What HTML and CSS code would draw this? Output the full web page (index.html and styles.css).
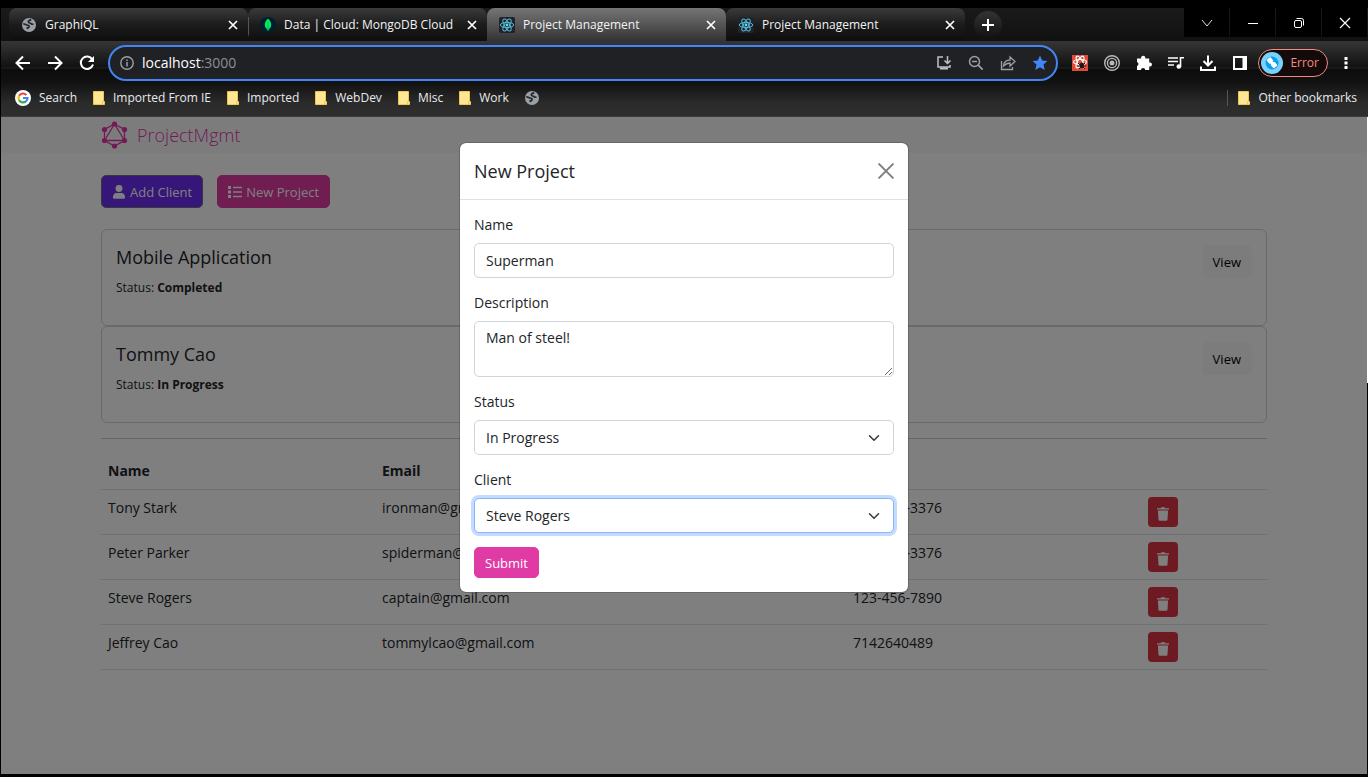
FILE: index.html
```html
<!DOCTYPE html>
<html lang="en">
<head>
<meta charset="utf-8">
<title>Project Management</title>
<link rel="stylesheet" href="styles.css">
</head>
<body>
<svg class="defs" aria-hidden="true">
  <symbol id="globe" viewBox="0 0 14 14"><circle cx="7" cy="7" r="7" fill="#9aa0a6"/><path d="M1.300 5.800C3 5.700 3.800 7 5.300 7.200c1.500.1 2.200.8 1.700 1.800-.5.900-1.500 1-2.500 1.600M9.300 1.800C7.500 2 6.300 2.600 6.300 3.800c0 1.300 1.600 1 2.400 1.600.9.700 1.300 1.100 2.800.8" fill="none" stroke="#25282c" stroke-width="1.700"/></symbol>
  <symbol id="close" viewBox="0 0 10 10"><path d="M1 1l8 8M9 1L1 9" fill="none" stroke="currentColor" stroke-width="1.700"/></symbol>
  <symbol id="react" viewBox="0 0 16 16"><rect width="16" height="16" rx="2" fill="#20232a"/><g fill="none" stroke="#53b9d3" stroke-width="1"><ellipse cx="8" cy="8" rx="6.700" ry="2.600"/><ellipse cx="8" cy="8" rx="6.700" ry="2.600" transform="rotate(60 8 8)"/><ellipse cx="8" cy="8" rx="6.700" ry="2.600" transform="rotate(120 8 8)"/></g><circle cx="8" cy="8" r="1.400" fill="#61dafb"/></symbol>
  <symbol id="folder" viewBox="0 0 12 14"><path d="M.5.500h10v10h1v3H.5z" fill="#ffe694" stroke="#eec84c"/><path d="M9.500 10.500v2.500" stroke="#eec84c"/></symbol>
  <symbol id="trash" viewBox="0 0 12 14"><path d="M0 1.200h3.700L4.300.300h3.400l.6.900H12v1.300H0zM.9 3.500h10.200l-.6 9.200q-.1 1.100-1.300 1.100H2.800q-1.200 0-1.300-1.100z" fill="currentColor"/></symbol>
  <symbol id="chevron" viewBox="0 0 16 16"><path d="M2 5l6 6 6-6" fill="none" stroke="#343a40" stroke-width="2" stroke-linecap="round" stroke-linejoin="round"/></symbol>
</svg>

<div class="browser">
  <header class="chrome">
    <div class="tabstrip">
      <div class="tabs">
        <div class="tab"><svg class="favicon favicon-small"><use href="#globe"/></svg><span class="tab-title">GraphiQL</span><button class="tab-close" aria-label="Close tab"><svg><use href="#close"/></svg></button></div>
        <div class="tab tab-divided"><svg class="favicon" viewBox="0 0 16 16"><circle cx="8" cy="8" r="8" fill="#001e2b"/><path d="M8 1.500c2.400 2.300 3.200 4.500 3.200 6.300 0 2-1 3.500-2.600 4.600L8.300 14h-.6l-.3-1.600C5.800 11.300 4.800 9.800 4.800 7.800 4.800 6 5.600 3.800 8 1.500z" fill="#00ed64"/><path d="M8 5v8" stroke="#00a651" stroke-width=".8"/></svg><span class="tab-title">Data | Cloud: MongoDB Cloud</span><button class="tab-close" aria-label="Close tab"><svg><use href="#close"/></svg></button></div>
        <div class="tab tab-active"><svg class="favicon"><use href="#react"/></svg><span class="tab-title">Project Management</span><button class="tab-close" aria-label="Close tab"><svg><use href="#close"/></svg></button></div>
        <div class="tab"><svg class="favicon"><use href="#react"/></svg><span class="tab-title">Project Management</span><button class="tab-close" aria-label="Close tab"><svg><use href="#close"/></svg></button></div>
      </div>
      <button class="new-tab" aria-label="New tab"><svg viewBox="0 0 12 12"><path d="M6 0v12M0 6h12" stroke="#fff" stroke-width="2"/></svg></button>
      <div class="window-controls">
        <button aria-label="Search tabs"><svg viewBox="0 0 12 12"><path d="M1 3l5 6 5-6" fill="none" stroke="#ddd"/></svg></button>
        <button aria-label="Minimize"><svg viewBox="0 0 12 12"><path d="M1 6.500h10" stroke="#fff"/></svg></button>
        <button aria-label="Restore"><svg viewBox="0 0 12 12"><rect x="1.500" y="3.500" width="7" height="7" rx="1.500" fill="none" stroke="#fff"/><path d="M3.500 1.500h5q2 0 2 2v5" fill="none" stroke="#fff"/></svg></button>
        <button aria-label="Close"><svg viewBox="0 0 12 12"><path d="M1 1l10 10M11 1L1 11" stroke="#fff" stroke-width="1.200"/></svg></button>
      </div>
    </div>

    <div class="toolbar">
      <div class="tool-group">
        <button class="tool" aria-label="Back"><svg viewBox="0 0 20 20"><path d="M17 10H4M10 3.500L3.500 10l6.500 6.500" fill="none" stroke="#fff" stroke-width="2"/></svg></button>
        <button class="tool" aria-label="Forward"><svg viewBox="0 0 20 20"><path d="M3 10h13M10 3.500l6.500 6.500-6.500 6.500" fill="none" stroke="#fff" stroke-width="2"/></svg></button>
        <button class="tool" aria-label="Reload"><svg viewBox="0 0 20 20"><path d="M15.300 6.400A6.200 6.200 0 1 0 16 11.500" fill="none" stroke="#fff" stroke-width="2"/><path d="M17 3v6h-6z" fill="#fff"/></svg></button>
      </div>
      <div class="omnibox">
        <svg class="info" viewBox="0 0 14 14"><circle cx="7" cy="7" r="6.200" fill="none" stroke="#9aa0a6" stroke-width="1.400"/><path d="M7 6v4.500M7 3.500V5" stroke="#9aa0a6" stroke-width="1.500"/></svg>
        <div class="url"><span class="host">localhost</span>:3000</div>
        <button class="tool" aria-label="Install"><svg viewBox="0 0 20 20"><path d="M9 4H4v10h12v-2M13.500 3v7M10.500 7.500l3 3 3-3" fill="none" stroke="#bdc1c6" stroke-width="1.500"/><path d="M6 15.500h8" stroke="#bdc1c6" stroke-width="2"/></svg></button>
        <button class="tool" aria-label="Zoom"><svg viewBox="0 0 20 20"><circle cx="8.500" cy="8.500" r="5" fill="none" stroke="#9aa0a6" stroke-width="1.500"/><path d="M12.200 12.200l4.500 4.500M6 8.500h5" stroke="#9aa0a6" stroke-width="1.700"/></svg></button>
        <button class="tool" aria-label="Share"><svg viewBox="0 0 20 20"><path d="M3.500 8v8.500h11V14M5.500 13c.5-4 3-6 6.500-6V4l5 4.500-5 4.500v-3c-3 0-4.500 1-6.500 3z" fill="none" stroke="#9aa0a6" stroke-width="1.300"/></svg></button>
        <button class="tool" aria-label="Bookmark"><svg viewBox="0 0 20 20"><path d="M10 2.500l2.200 5 5.300.5-4 3.600 1.200 5.400L10 14.200 5.300 17l1.200-5.400-4-3.600 5.300-.5z" fill="#4285f4"/></svg></button>
      </div>
      <div class="tool-group">
        <button class="tool" aria-label="React tools"><svg viewBox="0 0 20 20"><path d="M2 2h16v16H2z" fill="#dd4b39"/><g fill="none" stroke="#fff" stroke-width="1.200"><ellipse cx="10" cy="9" rx="6.500" ry="2.500"/><ellipse cx="10" cy="9" rx="6.500" ry="2.500" transform="rotate(60 10 9)"/><ellipse cx="10" cy="9" rx="6.500" ry="2.500" transform="rotate(120 10 9)"/></g><ellipse cx="12" cy="12.500" rx="2.200" ry="3" fill="#241616"/><path d="M8 10l2 2M8 13h8M9 16l2-2M15 10l-2 2M15 16l-2-2" stroke="#241616"/></svg></button>
        <button class="tool" aria-label="Target"><svg viewBox="0 0 20 20"><g fill="none" stroke="#b9b9b9" stroke-width="1.400"><circle cx="10" cy="10" r="7.300"/><circle cx="10" cy="10" r="4.600"/></g><circle cx="10" cy="10" r="2.500" fill="#b9b9b9"/></svg></button>
        <button class="tool" aria-label="Extensions"><svg viewBox="0 0 20 20"><path d="M3 5.500h4.200a2.100 2.100 0 1 1 4 0h4v4a2.100 2.100 0 1 1 0 4V17h-4a2.100 2.100 0 0 0-4.200 0H3v-4a2.100 2.100 0 0 0 0-4z" fill="#fff"/></svg></button>
        <button class="tool" aria-label="Media"><svg viewBox="0 0 20 20"><path d="M2 5h10M2 8.500h10M2 12h6M14.500 14V4.800H18" fill="none" stroke="#fff" stroke-width="1.600"/><circle cx="12.800" cy="13.500" r="2.300" fill="#fff"/></svg></button>
        <button class="tool" aria-label="Downloads"><svg viewBox="0 0 20 20"><path d="M10 2.500v9M5.500 8l4.500 4.500L14.500 8M3 13.500V17h14v-3.500" fill="none" stroke="#fff" stroke-width="2"/></svg></button>
        <button class="tool" aria-label="Side panel"><svg viewBox="0 0 20 20"><path d="M3 3h14v14H3zM5 5v10h7.500V5z" fill="#fff" fill-rule="evenodd"/></svg></button>
      </div>
      <button class="profile"><svg viewBox="0 0 22 22"><circle cx="11" cy="11" r="11" fill="#77d3fb"/><circle cx="11" cy="11" r="6.500" fill="#0a9ef0"/><rect x="6.500" y="6" width="5" height="5" rx="1" fill="#fff" transform="rotate(-40 9 8.500)"/><rect x="10.500" y="10.500" width="5" height="5" rx="1" fill="#fff" transform="rotate(-40 13 13)"/><path d="M9 9l4 4" stroke="#fff" stroke-width="3"/></svg><span>Error</span></button>
      <button class="menu" aria-label="Menu"><svg viewBox="0 0 4 14"><path d="M.5 1h3v3h-3zM.5 5.500h3v3h-3zM.5 10h3v3h-3z" fill="#fff"/></svg></button>
    </div>

    <nav class="bookmarks">
      <a href="#"><svg class="google" viewBox="0 0 16 16"><circle cx="8" cy="8" r="8" fill="#fff"/><g fill="none" stroke-width="2.200"><path d="M11.300 4.900A4.500 4.500 0 0 0 4.100 5.800" stroke="#ea4335"/><path d="M4.100 5.800a4.500 4.500 0 0 0 0 4.400" stroke="#fbbc05"/><path d="M4.100 10.200a4.500 4.500 0 0 0 6.800 1.200" stroke="#34a853"/><path d="M10.900 11.400A4.500 4.500 0 0 0 12.500 8H8" stroke="#4285f4"/></g></svg>Search</a>
      <a href="#"><svg class="folder"><use href="#folder"/></svg>Imported From IE</a>
      <a href="#"><svg class="folder"><use href="#folder"/></svg>Imported</a>
      <a href="#"><svg class="folder"><use href="#folder"/></svg>WebDev</a>
      <a href="#"><svg class="folder"><use href="#folder"/></svg>Misc</a>
      <a href="#"><svg class="folder"><use href="#folder"/></svg>Work</a>
      <a href="#" aria-label="Site"><svg class="globe"><use href="#globe"/></svg></a>
      <a href="#" class="other"><svg class="folder"><use href="#folder"/></svg>Other bookmarks</a>
    </nav>
  </header>

  <div class="page">
    <nav class="navbar">
      <div class="container">
        <a class="brand" href="#"><svg viewBox="0 0 26 28"><g fill="none" stroke="currentColor" stroke-width="1.300"><path d="M13 3l10 5.500v11L13 25 3 19.500v-11z"/><path d="M13 3l10 16.500H3z"/></g><g fill="currentColor"><circle cx="13" cy="3" r="2.600"/><circle cx="23" cy="8.500" r="2.600"/><circle cx="23" cy="19.500" r="2.600"/><circle cx="13" cy="25" r="2.600"/><circle cx="3" cy="19.500" r="2.600"/><circle cx="3" cy="8.500" r="2.600"/></g></svg>ProjectMgmt</a>
      </div>
    </nav>
    <main class="container">
      <div class="actions">
        <button class="btn btn-secondary"><svg class="user" viewBox="0 0 13 15"><circle cx="6.500" cy="3.700" r="3.700" fill="currentColor"/><path d="M0 13.500Q0 8.500 4 8.500h5q4 0 4 5 0 1.300-1.300 1.300H1.300Q0 14.800 0 13.500z" fill="currentColor"/></svg>Add Client</button>
        <button class="btn btn-primary"><svg class="list" viewBox="0 0 14 12"><path d="M0 0h3v3H0zM0 4.500h3v3H0zM0 9h3v3H0zM5 .700h9v1.500H5zM5 5.200h9v1.500H5zM5 9.700h9v1.500H5z" fill="currentColor"/></svg>New Project</button>
      </div>
      <section class="projects">
        <article class="card"><div><h5>Mobile Application</h5><p>Status: <strong>Completed</strong></p></div><a class="btn btn-light" href="#">View</a></article>
        <article class="card"><div><h5>Tommy Cao</h5><p>Status: <strong>In Progress</strong></p></div><a class="btn btn-light" href="#">View</a></article>
      </section>
      <hr>
      <table class="clients">
        <colgroup><col class="col-name"><col class="col-email"><col class="col-phone"><col></colgroup>
        <thead><tr><th>Name</th><th>Email</th><th>Phone</th><th></th></tr></thead>
        <tbody>
          <tr><td>Tony Stark</td><td>ironman@gmail.com</td><td>955-365-3376</td><td><button class="btn-delete" aria-label="Delete"><svg><use href="#trash"/></svg></button></td></tr>
          <tr><td>Peter Parker</td><td>spiderman@gmail.com</td><td>955-365-3376</td><td><button class="btn-delete" aria-label="Delete"><svg><use href="#trash"/></svg></button></td></tr>
          <tr><td>Steve Rogers</td><td>captain@gmail.com</td><td>123-456-7890</td><td><button class="btn-delete" aria-label="Delete"><svg><use href="#trash"/></svg></button></td></tr>
          <tr><td>Jeffrey Cao</td><td>tommylcao@gmail.com</td><td>7142640489</td><td><button class="btn-delete" aria-label="Delete"><svg><use href="#trash"/></svg></button></td></tr>
        </tbody>
      </table>
    </main>

    <div class="backdrop">
      <div class="modal" role="dialog" aria-labelledby="modal-title">
        <div class="modal-header">
          <h5 id="modal-title">New Project</h5>
          <button class="btn-close" aria-label="Close"><svg viewBox="0 0 14 14"><path d="M1 1l12 12M13 1L1 13" stroke="#000" stroke-width="1.700" stroke-linecap="round"/></svg></button>
        </div>
        <form class="modal-body">
          <div class="field"><label for="name">Name</label><input id="name" type="text" value="Superman"></div>
          <div class="field"><label for="description">Description</label><textarea id="description">Man of steel!</textarea></div>
          <div class="field"><label for="status">Status</label><div class="select"><select id="status"><option>In Progress</option></select><svg><use href="#chevron"/></svg></div></div>
          <div class="field"><label for="client">Client</label><div class="select"><select id="client" class="focused"><option>Steve Rogers</option></select><svg><use href="#chevron"/></svg></div></div>
          <button class="btn btn-primary btn-submit" type="button">Submit</button>
        </form>
      </div>
    </div>
  </div>
</div>
</body>
</html>
```

FILE: styles.css
```css
* { box-sizing: border-box; }
html, body { height: 100%; }
body {
  margin: 0;
  background: #000;
  font-family: "Open Sans", "Noto Sans", sans-serif;
  font-size: 14px;
  line-height: 22px;
  color: #212529;
}
button, input, select, textarea { font: inherit; color: inherit; margin: 0; }
button { border: 0; padding: 0; background: none; }
a { color: inherit; text-decoration: none; }
svg { display: block; flex: none; }
.defs { position: absolute; width: 0; height: 0; }

.browser {
  display: flex;
  flex-direction: column;
  min-height: 100vh;
  padding: 8px 0 3px 1px;
}

/* Tabs */
.chrome { color: #e8eaed; font-size: 12px; line-height: 16px; border-bottom: 1px solid #3c3c3c; }
.tabstrip {
  display: flex;
  height: 33px;
  padding-left: 8px;
  background: linear-gradient(#1a1a1a, #111);
}
.tabs { display: flex; flex: 0 1 956px; min-width: 0; }
.tab {
  display: flex;
  flex: 1;
  align-items: center;
  gap: 8px;
  min-width: 0;
  padding: 0 10px 0 12px;
  border-radius: 8px;
  background: linear-gradient(#3b3b3b, #1c1c1c 50%, #0e0e0e);
}
.tab-divided { background: linear-gradient(#555, #555) 0 70% / 1px 20px no-repeat, linear-gradient(#3b3b3b, #1c1c1c 50%, #0e0e0e); }
.tab-active {
  border-radius: 8px 8px 0 0;
  background: linear-gradient(#757575, #555 50%, #333);
}
.favicon { width: 16px; height: 16px; }
.favicon-small { padding: 1px; }
.tab-title { flex: 1; min-width: 0; white-space: nowrap; overflow: hidden; color: #f1f3f4; }
.tab-close svg { width: 10px; height: 10px; color: #fff; }
.new-tab {
  display: grid;
  place-items: center;
  width: 28px;
  height: 28px;
  margin: 3px 9px;
  border-radius: 50%;
  background: linear-gradient(#333, #111);
}
.new-tab svg { width: 12px; height: 12px; }
.window-controls { display: flex; gap: 1px; margin: 0 1px 0 auto; }
.window-controls button { display: grid; place-items: center; width: 45px; height: 29px; background: #000; }
.window-controls svg { width: 12px; height: 12px; }

/* Address bar */
.toolbar {
  display: flex;
  align-items: center;
  height: 42px;
  padding: 4px 8px 2px 6px;
  background: linear-gradient(#363636, #111 26px, #222 27px, #0c0c0c 28px, #121212);
}
.tool-group { display: flex; }
.tool { display: grid; place-items: center; width: 32px; height: 32px; }
.tool svg { width: 20px; height: 20px; }
.omnibox {
  display: flex;
  flex: 1;
  align-items: center;
  height: 36px;
  margin: 0 6px 0 5px;
  padding-left: 10px;
  border: 2px solid #4285f4;
  border-radius: 18px;
  background: #202124;
}
.info { width: 14px; height: 14px; }
.url { flex: 1; padding-left: 8px; font-size: 14px; color: #8c9095; }
.host { color: #fff; }
.profile {
  display: flex;
  align-items: center;
  gap: 7px;
  height: 28px;
  margin: 0 4px 0 2px;
  padding: 0 8px 0 2px;
  border: 1px solid #f28b82;
  border-radius: 14px;
  background: #150a0a;
  color: #f28b82;
}
.profile svg { width: 22px; height: 22px; }
.menu { display: grid; place-items: center; width: 28px; }
.menu svg { width: 4px; height: 14px; }

/* Bookmarks */
.bookmarks {
  display: flex;
  align-items: center;
  gap: 16px;
  height: 33px;
  padding: 0 11px 3px 14px;
  background: linear-gradient(#121212, #2b2b2b 20px, #2e2e2e);
}
.bookmarks a { display: flex; align-items: center; gap: 8px; white-space: nowrap; }
.google { width: 16px; height: 16px; }
.folder { width: 12px; height: 14px; }
.globe { width: 14px; height: 14px; }
.bookmarks .other { margin-left: auto; padding-left: 10px; border-left: 1px solid #555; }

/* Page */
.page {
  position: relative;
  flex: 1;
  border-right: 1px solid #000;
  border-image: linear-gradient(#fff 266px, #000 266px) 1;
  background: #fff;
}
.container { max-width: 1166px; margin: 0 auto; }
.navbar { padding: 4px 0; background: #f8f9fa; }
.brand {
  display: inline-flex;
  align-items: center;
  gap: 9px;
  height: 28px;
  font-size: 18px;
  font-weight: 300;
  color: #e535ab;
  vertical-align: top;
}
.brand svg { width: 27px; height: 28px; }
.actions { display: flex; gap: 14px; margin: 22px 0 21px; }
.btn {
  display: inline-flex;
  align-items: center;
  justify-content: center;
  gap: 4px;
  height: 33px;
  padding: 0 10px;
  border: 1px solid transparent;
  border-radius: 5px;
  font-size: 13px;
}
.btn-secondary { background: #6f2cf3; border-color: #6c757d; color: #fff; }
.btn-primary { background: #e03aa5; border-color: #e03aa5; color: #fff; }
.btn-light { background: #f8f9fa; color: #000; }
.user { width: 14px; height: 14px; }
.list { width: 14px; height: 12px; }
.card {
  display: flex;
  justify-content: space-between;
  align-items: flex-start;
  min-height: 97px;
  padding: 15px 14px;
  border: 1px solid rgba(0, 0, 0, 0.175);
  border-radius: 6px;
}
h5 { margin: 0; font-size: 18px; font-weight: 500; line-height: 24px; }
.card h5 { margin-bottom: 8px; }
.card p { margin: 0; font-size: 12px; line-height: 22px; }
hr { margin: 15px 0 14px; border: 0; border-top: 1px solid #c8c9ca; }
.clients { width: 100%; border-collapse: collapse; table-layout: fixed; text-align: left; }
.clients th, .clients td { padding: 7px; vertical-align: top; border-bottom: 1px solid #dee2e6; }
.clients td { line-height: 22px; }
.col-name { width: 23.5%; }
.col-email { width: 40.4%; }
.col-phone { width: 25.3%; }
.btn-delete {
  display: grid;
  place-items: center;
  width: 30px;
  height: 30px;
  padding-top: 4px;
  border-radius: 4px;
  background: #dc3545;
  color: #fff;
}
.btn-delete svg { width: 12px; height: 14px; }

/* Modal */
.backdrop { position: absolute; inset: 0; padding-top: 25px; background: rgba(0, 0, 0, 0.5); }
.modal {
  width: 450px;
  max-width: 100%;
  margin: 0 auto;
  border: 1px solid rgba(0, 0, 0, 0.175);
  border-radius: 7px;
  background: #fff;
  background-clip: padding-box;
}
.modal-header {
  display: flex;
  align-items: center;
  justify-content: space-between;
  height: 57px;
  padding: 0 14px;
  border-bottom: 1px solid #dee2e6;
}
.btn-close { opacity: 0.5; }
.btn-close svg { width: 16px; height: 16px; }
.modal-body { padding: 14px; }
.field { display: grid; gap: 7px; margin-bottom: 14px; }
input, textarea, select {
  width: 100%;
  border: 1px solid #ced4da;
  border-radius: 5px;
  background: #fff;
  outline: 0;
}
input, select { height: 35px; padding: 0 11px; }
textarea { display: block; height: 56px; padding: 5px 11px; resize: vertical; }
.select { display: grid; align-items: center; }
.select select, .select svg { grid-area: 1 / 1; }
.select select { appearance: none; }
.select svg { justify-self: end; width: 12px; height: 12px; margin-right: 14px; pointer-events: none; }
.focused { border-color: #86b7fe; box-shadow: 0 0 0 3px rgba(13, 110, 253, 0.25); }
.btn-submit { height: 31px; }
```
